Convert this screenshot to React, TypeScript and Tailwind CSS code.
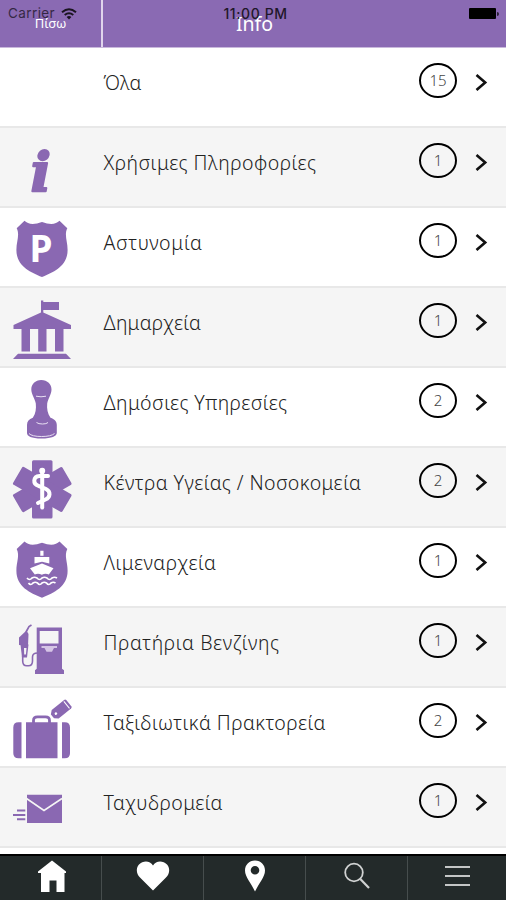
import type { ReactNode } from "react";

interface Category {
	id: number;
	label: string;
	count: number;
	icon?: ReactNode;
	labelWidth: number;
}

const SHIELD = "M24.5 12.8C28 16.5 34 17 42 14C50 17 56 16.5 59.5 12.8L67.3 20.3C64 27 67.6 33 67.6 42C67.6 58 54 64 42 69C30 64 16.4 58 16.4 42C16.4 33 20 27 16.7 20.3Z";

const InfoIcon = (
	<text x="30.5" y="62.5" fontFamily="DejaVu Serif, serif" fontSize="54" fontWeight="700" fontStyle="italic" stroke="currentColor" strokeWidth="2" strokeLinejoin="round">i</text>
);

const PoliceIcon = (
	<>
		<path d={SHIELD} />
		<text x="29.5" y="54" fill="#fff" fontFamily="Noto Sans, sans-serif" fontSize="37" fontWeight="700">P</text>
	</>
);

const TownHallIcon = (
	<>
		<path d="M41 12.5h2.3v1.5H59v8H43.3v2.5L71 37v4H13.5v-4L41 24.5z" />
		<path d="M21.5 40H30v23.500h-8.500zM38.2 40h8.300v23.500h-8.300zM55 40h8.500v23.500H55zM18 65.800h48l5 5.200H13z" />
	</>
);

const StampIcon = (
	<>
		<path d="M41.2 12c6.300 0 10.300 4.300 10.300 9.500 0 5-3.500 9-4.300 14-.5 5 .3 10 3.300 14.200 4 1.300 6.300 3.800 6.300 7.300v8c0 3-5 5.500-15.300 5.500S27 68 27 65v-8c0-3.500 2-6 5.800-7.300 3-4.200 3.500-9.200 3-14.200-.8-5-4.500-9-4.500-14C31.300 16.300 35.200 12 41.200 12z" />
		<path d="M36 28.200q5 1.200 10 0M36.500 54.500q2 1.500 6 1.500t5.500-1.500M29 65.500q3 3 12.500 3t13-3" fill="none" stroke="#e9e0f3" strokeWidth="1" />
	</>
);

const HealthIcon = (
	<>
		<rect x="32" y="12.3" width="20.5" height="58.2" rx="1.5" />
		<rect x="32" y="13" width="20.5" height="57" rx="1.5" transform="rotate(60 42.2 41.5)" />
		<rect x="32" y="13" width="20.5" height="57" rx="1.5" transform="rotate(-60 42.2 41.5)" />
		<path d="M42.2 22v37.500" fill="none" stroke="#fff" strokeWidth="4" strokeLinecap="round" />
		<circle cx="42.2" cy="22.8" r="3" fill="#fff" />
		<path d="M48 28H39.500c-6.500.5-7 8-1 9.800l7.500 3.200c5 2.500 4.500 8.500-.5 10.500l-7.500 3.500" fill="none" stroke="#fff" strokeWidth="4" strokeLinecap="round" />
	</>
);

const PortIcon = (
	<>
		<path d={SHIELD} transform="translate(0 .8)" />
		<g fill="#fff">
			<path d="M40.300 22.700h3.200v5h-3.200zM34.500 29h14.800v6.500l-7.300-1.800-7.500 1.800z" />
			<path d="M30 40.300l12-4.800 11.500 4.800-4.700 6.200q-3.500-1.500-7 .3-3.500-1.800-7-.3z" />
		</g>
		<path d="M27 50q2.500 3 5 0 2.500-1.500 5 0 2.500 3 5 0 2.500-1.500 5 0 2.500 3 5 0 2.500-1.500 5 0M28.500 55q2.200 3 4.500 0 2.200-1.500 4.500 0 2.200 3 4.500 0 2.200-1.500 4.500 0 2.200 3 4.500 0 2.200-1.500 4.500 0" fill="none" stroke="#fff" strokeWidth="1.7" />
	</>
);

const FuelIcon = (
	<>
		<path d="M36.700 19.500H62v41.300l2 1.500V66H35v-3.700l1.700-1.500z" />
		<path d="M39.700 23h18.800v12.500H39.700z" fill="#f5f5f5" />
		<path d="M41.500 38h15.500v2h-3l-2 3.700h-5.500l-2-3.700h-3z" fill="#d6c5e6" />
		<path d="M31.500 17l-2.500 1.500-3 5.500" fill="none" stroke="currentColor" strokeWidth="1.7" />
		<path d="M26.500 22.500l2 3.500-.5 12-9-1v-7.500z" />
		<path d="M20.500 36.500h8l-1.500 13h-5z" />
		<path d="M24 40h2.500l-.6 6.500h-1.700z" fill="#f5f5f5" />
		<path d="M22.700 48v5q0 4.700 4 4.700h1.800q4 0 4-4.700v-4q0-4 5-4" fill="none" stroke="currentColor" strokeWidth="1.6" />
	</>
);

const TravelIcon = (
	<>
		<path d="M18.500 34.300h3v36h-3q-5.200 0-5.200-5V39.500q0-5.200 5.200-5.200zM26 34.300h31.500v36H26zM62 34.300h2.800q5.200 0 5.200 5.200v25.800q0 5-5.200 5H62z" />
		<path d="M33.500 35v-2.500q0-3.700 4-3.700h8q4 0 4 3.700V35" fill="none" stroke="currentColor" strokeWidth="2.8" />
		<g transform="rotate(-39 61 21.5)">
			<path d="M53.500 16h16q1.500 0 1.500 1.500v8q0 1.500-1.500 1.500h-16L50 24v-5z" />
			<circle cx="54.5" cy="21.5" r="1.3" fill="#fff" />
			<path d="M68.300 17v9" stroke="#fff" strokeWidth="1" />
		</g>
	</>
);

const MailIcon = (
	<>
		<path d="M27 26.800h35V55H27z" />
		<path d="M26.500 30.500L44 42.500l18-12" fill="none" stroke="#f5f5f5" strokeWidth="1.6" />
		<path d="M17 42.500h8.300M13 47h12.300M17 51.200h8.300" fill="none" stroke="currentColor" strokeWidth="2" />
	</>
);

const categories: Category[] = [
	{ id: 0, label: "Όλα", count: 15, labelWidth: 38 },
	{ id: 1, label: "Χρήσιμες Πληροφορίες", count: 1, icon: InfoIcon, labelWidth: 212.5 },
	{ id: 2, label: "Αστυνομία", count: 1, icon: PoliceIcon, labelWidth: 98.5 },
	{ id: 3, label: "Δημαρχεία", count: 1, icon: TownHallIcon, labelWidth: 97.5 },
	{ id: 4, label: "Δημόσιες Υπηρεσίες", count: 2, icon: StampIcon, labelWidth: 183.5 },
	{ id: 5, label: "Κέντρα Υγείας / Νοσοκομεία", count: 2, icon: HealthIcon, labelWidth: 257.5 },
	{ id: 6, label: "Λιμεναρχεία", count: 1, icon: PortIcon, labelWidth: 112.5 },
	{ id: 7, label: "Πρατήρια Βενζίνης", count: 1, icon: FuelIcon, labelWidth: 175.5 },
	{ id: 8, label: "Ταξιδιωτικά Πρακτορεία", count: 2, icon: TravelIcon, labelWidth: 222 },
	{ id: 9, label: "Ταχυδρομεία", count: 1, icon: MailIcon, labelWidth: 119 },
];

function StatusBar() {
	return (
		<div className="absolute inset-x-0 top-0 flex h-[27px] items-center justify-between pl-2 pr-[7px] font-['Inter','Liberation_Sans',sans-serif] text-[#1f1729]">
			<div className="flex w-40 items-center gap-1.5">
				<span className="text-[13.5px] tracking-[0.4px] opacity-80">Carrier</span>
				<svg width="16" height="12" viewBox="0 0 16 12" fill="none" stroke="#1a1420" strokeWidth="2">
					<path d="M1 4.300q7-6 14 0M3.700 7q4.300-3.500 8.600 0" />
					<path d="M5.600 9L8 11.500 10.400 9Q8 7.200 5.600 9z" fill="#1a1420" stroke="none" />
				</svg>
			</div>
			<span className="ml-1 whitespace-nowrap text-[14px] font-medium tracking-[0.6px]">11:00 PM</span>
			<div className="flex w-40 items-center justify-end gap-px">
				<div className="h-[11px] w-[27px] rounded-[1px] bg-black" />
				<div className="h-1 w-[2px] rounded-r bg-black/70" />
			</div>
		</div>
	);
}

function Header() {
	return (
		<header className="relative flex h-12 border-b border-[#c9b9dc] bg-[#8a6ab3] text-white">
			<button className="flex w-[103px] items-center justify-center border-r-2 border-[#e0d5ec] text-[13px] leading-none">
				<span className="-mt-px">Πίσω</span>
			</button>
			<h1 className="flex flex-1 items-center justify-center pr-[100px] text-[19.5px] leading-none">
				<span>Info</span>
			</h1>
			<StatusBar />
		</header>
	);
}

function CategoryRow({ category, shaded }: { category: Category; shaded: boolean }) {
	return (
		<li className={`flex h-20 items-start border-b-2 border-[#e8e8e8] ${shaded ? "bg-[#f5f5f5]" : "bg-white"}`}>
			<svg className="h-[78px] w-[103px] shrink-0 text-[#8a68b2]" viewBox="0 0 103 78" fill="currentColor">
				{category.icon}
			</svg>
			<div className="flex h-[70px] flex-1 items-center">
				<svg className="h-[70px] w-[280px] overflow-visible" fill="#222">
					<text x="0.5" y="42" fontSize="19.5" fontWeight="300" textLength={category.labelWidth}>{category.label}</text>
				</svg>
			</div>
			<div className="mr-[18px] mt-[15px] flex h-[35px] w-[38px] items-center justify-center rounded-[50%] border-2 border-black text-[15px] leading-none font-light text-[#444]">
				{category.count}
			</div>
			<svg className="mr-[18px] mt-[26px] h-[17px] w-[13px]" viewBox="0 0 13 17" fill="none" stroke="#111" strokeWidth="2.6">
				<path d="M1.500 1l8.700 7.500L1.500 16" />
			</svg>
		</li>
	);
}

function TabBar() {
	const tab = "flex w-[102px] items-center justify-center border-r border-[#464d4d]";
	return (
		<nav className="flex h-[46px] border-t-2 border-black bg-[#232a2a]">
			<button className={tab}>
				<svg className="-mt-1 ml-0.5" width="30" height="33" viewBox="0 0 30 33" fill="#fff">
					<path d="M15 .5L29 11.500v1.500H27.500v19h-8V20.500h-7V32H4V13H1v-1.500z" />
				</svg>
			</button>
			<button className={tab}>
				<svg className="-mt-1" width="34" height="30" viewBox="0 0 34 30" fill="#fff">
					<path d="M17 4.500C20-.5 27-.5 31 3.500c3.500 4 2.500 9.500-1 13L17 29.500 4 16.500C.5 13-.5 7.500 3 3.500 7-.5 14-.5 17 4.500z" />
				</svg>
			</button>
			<button className={tab}>
				<svg className="-mt-1" width="22" height="32" viewBox="0 0 22 32" fill="#fff" fillRule="evenodd">
					<path d="M11 .5c6 0 10 4.500 10 10C21 17 15 23 11 31.500 7 23 1 17 1 10.500 1 5 5 .5 11 .5zM11 6a4.300 4.300 0 100 8.600A4.300 4.300 0 0011 6z" />
				</svg>
			</button>
			<button className={tab}>
				<svg className="-mt-1" width="28" height="28" viewBox="0 0 28 28" fill="none" stroke="#d0d2d2">
					<circle cx="11" cy="10.5" r="8.8" strokeWidth="1.8" />
					<path d="M17.300 17l8.700 9" strokeWidth="2.2" />
				</svg>
			</button>
			<button className="flex flex-1 flex-col items-center justify-center gap-[7px] pb-1">
				<span className="h-[2px] w-[25px] bg-[#c4c6c6]" />
				<span className="h-[2px] w-[25px] bg-[#c4c6c6]" />
				<span className="h-[2px] w-[25px] bg-[#c4c6c6]" />
			</button>
		</nav>
	);
}

export default function App() {
	return (
		<div className="flex h-[900px] w-[506px] flex-col overflow-hidden bg-white font-['Noto_Sans','Open_Sans',sans-serif]">
			<Header />
			<ul className="flex-1">
				{categories.map((category, index) => (
					<CategoryRow key={category.id} category={category} shaded={index % 2 === 1} />
				))}
			</ul>
			<TabBar />
		</div>
	);
}
